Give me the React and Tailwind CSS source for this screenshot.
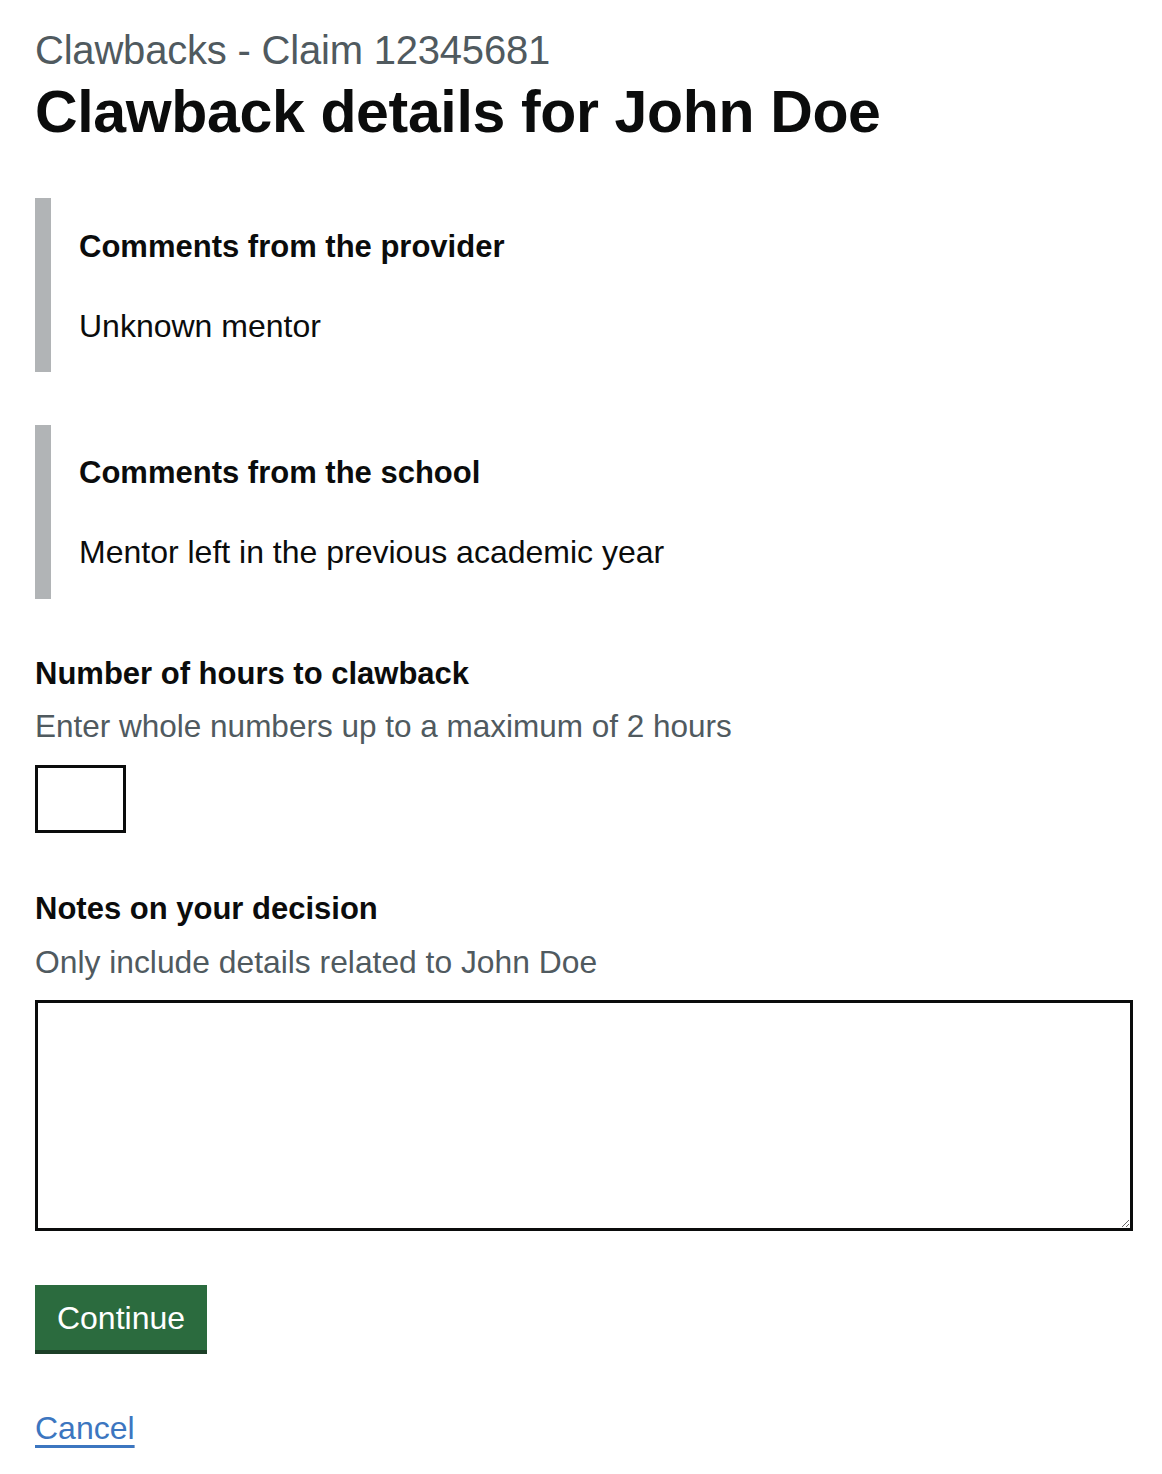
export default function App() {
  const font = { fontFamily: '"Liberation Sans", Arial, sans-serif' };
  return (
    <div className="bg-white w-[1162px] min-h-[1474px] text-[#0b0c0c]" style={font}>
      <div className="pl-[35px] pr-[30px] pt-[26px]">
        <div className="text-[40px] leading-[48px] text-[#505a5f] tracking-[-0.2px]">Clawbacks - Claim 12345681</div>
        <h1 className="mt-[6px] text-[59px] leading-[64px] font-bold tracking-[-0.35px]">Clawback details for John Doe</h1>

        <div className="mt-[54px] border-l-[16px] border-[#b1b4b6] pl-[28px] pt-[27px] pb-[24px]">
          <div className="text-[31px] leading-[44px] font-bold">Comments from the provider</div>
          <div className="mt-[35px] text-[32px] leading-[44px]">Unknown mentor</div>
        </div>

        <div className="mt-[53px] border-l-[16px] border-[#b1b4b6] pl-[28px] pt-[26px] pb-[25px]">
          <div className="text-[31px] leading-[44px] font-bold">Comments from the school</div>
          <div className="mt-[35px] text-[32px] leading-[44px]">Mentor left in the previous academic year</div>
        </div>

        <div className="mt-[53px] text-[31px] leading-[44px] font-bold">Number of hours to clawback</div>
        <div className="mt-[8px] text-[31.5px] leading-[44px] text-[#505a5f]">Enter whole numbers up to a maximum of 2 hours</div>
        <input type="text" className="mt-[17px] block w-[91px] h-[68px] border-[3px] border-[#0b0c0c] bg-white outline-none" />

        <div className="mt-[54px] text-[31px] leading-[44px] font-bold">Notes on your decision</div>
        <div className="mt-[9px] text-[31.8px] leading-[44px] text-[#505a5f]">Only include details related to John Doe</div>
        <textarea className="mt-[16px] block w-[1098px] h-[231px] border-[3px] border-[#0b0c0c] bg-white outline-none resize-y" />

        <button className="mt-[54px] block w-[172px] h-[65px] bg-[#2b6b3e] text-white text-[32px] leading-[44px] shadow-[0_4px_0_#1c3f27]">
          Continue
        </button>

        <a href="#" className="mt-[56px] inline-block text-[32px] leading-[44px] text-[#3c76c0] underline underline-offset-[6px] decoration-[3px]">
          Cancel
        </a>
      </div>
    </div>
  );
}
